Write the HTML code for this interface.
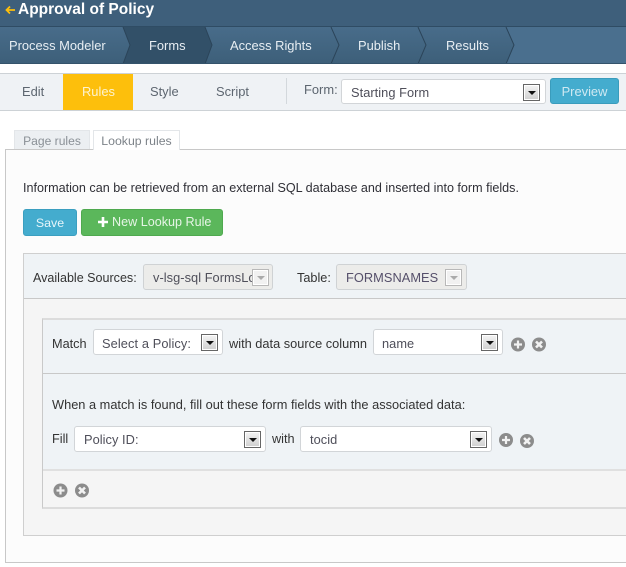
<!DOCTYPE html>
<html><head><meta charset="utf-8"><style>
html,body{margin:0;padding:0;background:#fff}
#p{position:relative;width:626px;height:567px;overflow:hidden;font-family:"Liberation Sans",Arial,sans-serif;font-size:12.7px;color:#333;letter-spacing:0}
#p div,#p span.t{position:absolute;white-space:nowrap;box-sizing:border-box}
.t{line-height:16px}
.nav{color:#e8eef3;font-size:12.9px}
.tb{color:#5d6670;font-size:12.9px}
.sel{background:#fff;border:1px solid #d2d5d8;border-radius:3px}
.sel.dis{background:#ececea;border-color:#cfd2d4}
.arr{width:17px;height:17px;top:50%;margin-top:-8px;background:linear-gradient(#f4f4f4,#cfcfcf);border:1px solid #666;box-shadow:inset 0 0 0 1px #fff}
.arr:after{content:"";position:absolute;left:4px;top:6px;border:4px solid transparent;border-top:4px solid #111;border-bottom:0}
.dis .arr{background:#f1f1f1;border-color:#b8b8b8}
.dis .arr:after{border-top-color:#aaa}
.st{color:#4f4f5a;font-size:12.8px;letter-spacing:.05px}
</style></head><body><div id="p">

<div style="left:0;top:0;width:626px;height:27px;background:#3e5f7b;border-bottom:1px solid #2f4c64"></div>
<svg style="position:absolute;left:5px;top:5px" width="11" height="10"><path d="M1 5H10M5 1.5L1.5 5L5 8.5" fill="none" stroke="#fdbf0c" stroke-width="1.8"/></svg>
<span class="t" style="position:absolute;left:18px;top:1px;color:#fff;font-weight:bold;font-size:15.5px;letter-spacing:0;line-height:18px">Approval of Policy</span>

<svg style="position:absolute;left:0;top:27px" width="626" height="37">
<defs><linearGradient id="g" x1="0" y1="0" x2="0" y2="1"><stop offset="0" stop-color="#486c8a"/><stop offset="1" stop-color="#3d5f79"/></linearGradient></defs>
<rect width="626" height="37" fill="#4a6f8e"/>
<path d="M0 0H506L514 18L506 37H0Z" fill="url(#g)"/>
<path d="M123 0H205L212 18L205 37H123L130 18Z" fill="#325068"/>
<path d="M123 0L130 18L123 37M205 0L212 18L205 37M331 0L339 18L331 37M418 0L426 18L418 37M506 0L514 18L506 37" fill="none" stroke="#2b4459" stroke-width="1"/>
<rect y="36" width="626" height="1" fill="#34536b"/>
</svg>
<span class="t nav" style="position:absolute;left:9px;top:38px">Process Modeler</span>
<span class="t nav" style="position:absolute;left:149px;top:38px">Forms</span>
<span class="t nav" style="position:absolute;left:230px;top:38px">Access Rights</span>
<span class="t nav" style="position:absolute;left:358px;top:38px">Publish</span>
<span class="t nav" style="position:absolute;left:446px;top:38px">Results</span>

<div style="left:0;top:73px;width:626px;height:38px;background:#eff2f5;border-top:1px solid #cdd2d6;border-bottom:1px solid #cdd2d6"></div>
<div style="left:63px;top:74px;width:70px;height:36px;background:#fdbf0c"></div>
<span class="t tb" style="position:absolute;left:22px;top:84px">Edit</span>
<span class="t tb" style="position:absolute;left:82px;top:84px;color:#fdf3d0">Rules</span>
<span class="t tb" style="position:absolute;left:150px;top:84px">Style</span>
<span class="t tb" style="position:absolute;left:216px;top:84px">Script</span>
<div style="left:286px;top:78px;width:1px;height:26px;background:#d3d8dc"></div>
<span class="t tb" style="position:absolute;left:304px;top:82px">Form:</span>
<div class="sel" style="left:341px;top:79px;width:205px;height:25px"><span class="t st" style="position:absolute;left:9px;top:5px">Starting Form</span><div class="arr" style="right:5px"></div></div>
<div style="left:550px;top:78px;width:69px;height:26px;background:#44acce;border:1px solid #3a9cbc;border-radius:3px;color:#cfe9f2;text-align:center;line-height:26px;font-size:12.9px">Preview</div>

<div style="left:14px;top:130px;width:76px;height:20px;background:#eceff2;border:1px solid #e3e6e9;border-bottom:0;color:#8a9096;text-align:center;line-height:21px;font-size:12.1px">Page rules</div>
<div style="left:5px;top:149px;width:640px;height:414px;background:#fcfcfc;border:1px solid #c8c8c8"></div>
<div style="left:93px;top:130px;width:87px;height:20px;background:#fff;border:1px solid #e3e6e9;border-bottom:0;color:#7d8389;text-align:center;line-height:21px;font-size:12.3px">Lookup rules</div>

<span class="t" style="position:absolute;left:23px;top:180px;color:#2f2f36;font-size:12.58px">Information can be retrieved from an external SQL database and inserted into form fields.</span>
<div style="left:23px;top:209px;width:54px;height:27px;background:#44acce;border:1px solid #3b9fc0;border-radius:3px;color:#e6f5fa;text-align:center;line-height:27px;font-size:12.4px">Save</div>
<div style="left:81px;top:209px;width:142px;height:27px;background:#5bb75b;border:1px solid #4fa94f;border-radius:3px;color:#e6f5e6;line-height:25px;padding-left:30px;font-size:12.6px">New Lookup Rule</div>
<svg style="position:absolute;left:98px;top:217px" width="10" height="10"><path d="M5 0V10M0 5H10" stroke="#fff" stroke-width="2.6"/></svg>

<div style="left:23px;top:253px;width:640px;height:283px;background:#f5f5f5;border:1px solid #cfcfcf"></div>
<div style="left:24px;top:254px;width:640px;height:45px;background:#eff3f6;border-bottom:1px solid #c8c8c8"></div>
<span class="t" style="position:absolute;left:33px;top:270px;font-size:12.55px">Available Sources:</span>
<div class="sel dis" style="left:143px;top:264px;width:130px;height:26px;overflow:hidden"><span class="t st" style="position:absolute;left:9px;top:5px">v-lsg-sql FormsLo</span><div class="arr" style="left:108px"></div></div>
<span class="t" style="position:absolute;left:297px;top:270px">Table:</span>
<div class="sel dis" style="left:336px;top:264px;width:131px;height:26px"><span class="t st" style="position:absolute;left:9px;top:5px;color:#554f6a">FORMSNAMES</span><div class="arr" style="left:108px"></div></div>

<div style="left:42px;top:318px;width:640px;height:191px;background:#f5f5f5;border:1px solid #c9c9c9;border-top:2px solid #dcdcdc;border-bottom:2px solid #dcdcdc"></div>
<div style="left:43px;top:320px;width:640px;height:54px;background:#eff3f6;border-bottom:1px solid #c8c8c8"></div>
<div style="left:43px;top:374px;width:640px;height:97px;background:#eff3f6;border-bottom:2px solid #e0e0e0"></div>

<span class="t" style="position:absolute;left:52px;top:336px">Match</span>
<div class="sel" style="left:93px;top:329px;width:130px;height:26px"><span class="t st" style="position:absolute;left:8px;top:6px;letter-spacing:.1px">Select a Policy:</span><div class="arr" style="right:4px"></div></div>
<span class="t" style="position:absolute;left:229px;top:336px;font-size:12.8px">with data source column</span>
<div class="sel" style="left:373px;top:329px;width:130px;height:26px"><span class="t st" style="position:absolute;left:8px;top:6px">name</span><div class="arr" style="right:4px"></div></div>

<span class="t" style="position:absolute;left:52px;top:397px;font-size:12.8px">When a match is found, fill out these form fields with the associated data:</span>
<span class="t" style="position:absolute;left:52px;top:431px">Fill</span>
<div class="sel" style="left:74px;top:426px;width:192px;height:26px"><span class="t st" style="position:absolute;left:9px;top:5px">Policy ID:</span><div class="arr" style="right:4px"></div></div>
<span class="t" style="position:absolute;left:272px;top:431px">with</span>
<div class="sel" style="left:300px;top:426px;width:192px;height:26px"><span class="t st" style="position:absolute;left:9px;top:5px">tocid</span><div class="arr" style="right:4px"></div></div>

<svg style="position:absolute;left:0;top:0;pointer-events:none" width="626" height="567">
<defs>
<g id="pl"><circle r="7" fill="#8c8c8c"/><path d="M-4 0H4M0 -4V4" stroke="#f2f2f2" stroke-width="2.2"/></g>
<g id="xx"><circle r="7" fill="#8c8c8c"/><path d="M-3 -3L3 3M3 -3L-3 3" stroke="#f2f2f2" stroke-width="2.6"/></g>
</defs>
<use href="#pl" x="518" y="344.500"/><use href="#xx" x="539" y="344.500"/>
<use href="#pl" x="506" y="440"/><use href="#xx" x="527" y="441"/>
<use href="#pl" x="60.500" y="490.500"/><use href="#xx" x="82" y="490.500"/>
</svg>

</div></body></html>
